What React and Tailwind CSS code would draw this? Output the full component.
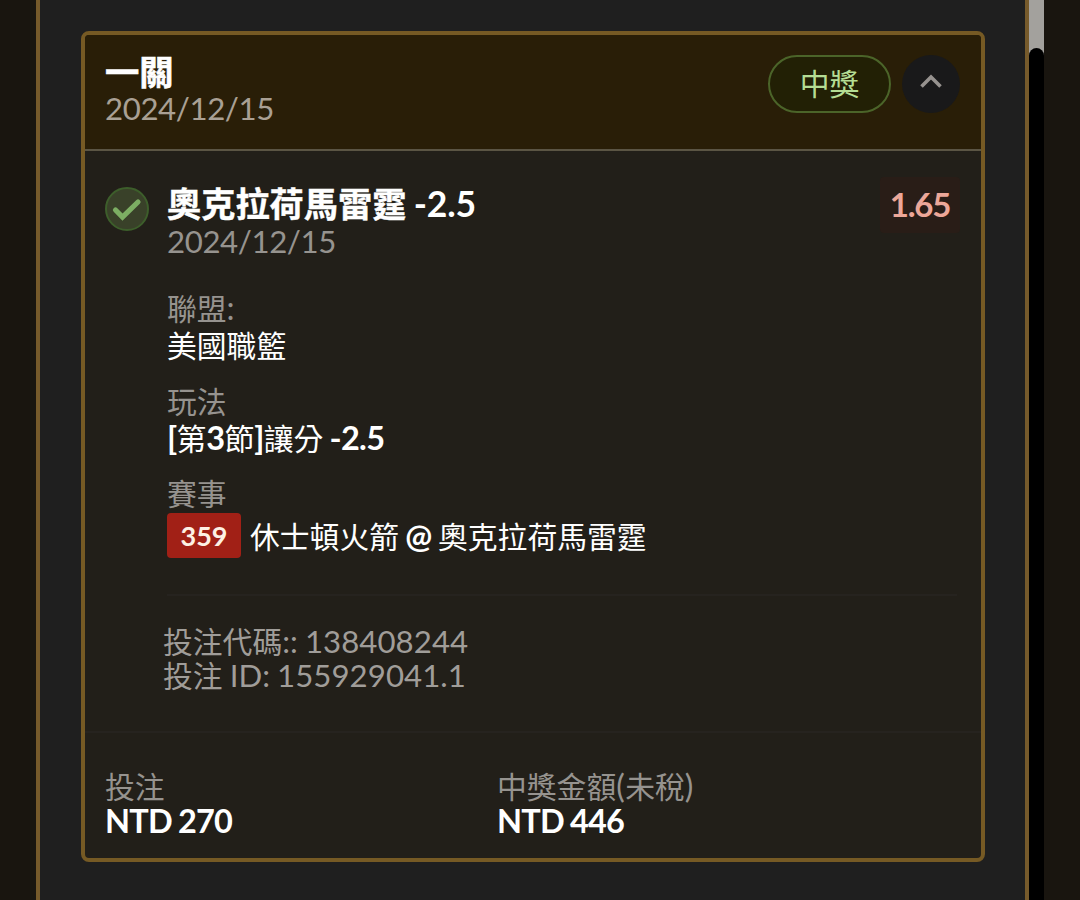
import React from 'react';

const BET_DETAILS = [
  { key: 'league', label: '聯盟', suffix: ':' },
  { key: 'market', label: '玩法' },
  { key: 'match', label: '賽事' }
];

// Chinese runs are set slightly smaller than the Latin ones and never go bold inside values
const Zh = ({ children }) => (
  <span className="text-[29.8px] font-normal tracking-normal">{children}</span>
);

const DetailValue = ({ type }) => {
  if (type === 'league') {
    return <div className="h-[37px] leading-[35px] text-white"><Zh>美國職籃</Zh></div>;
  }

  if (type === 'market') {
    return (
      <div className="h-[37px] text-[32.5px] leading-[35px] font-bold tracking-[-0.7px] text-white">
        [<Zh>第</Zh>3<Zh>節</Zh>]<Zh>讓分</Zh> -2.5
      </div>
    );
  }

  return (
    <div className="mt-px flex h-[45px] items-center text-white">
      <span className="mr-[9px] h-[45px] w-[74px] rounded-[4px] bg-[#a12016] text-center text-[27px] leading-[46px] font-bold tracking-normal text-[#fdf0e4]">
        359
      </span>
      <span className="leading-[45px] font-bold"><Zh>休士頓火箭</Zh> @ <Zh>奧克拉荷馬雷霆</Zh></span>
    </div>
  );
};

const TicketHeader = () => (
  <div className="flex h-[116px] justify-between border-b-2 border-[#5b5544] bg-[#291e07] pt-5 pr-[21px] pl-5">
    <div>
      <div className="h-9 text-[34.3px] leading-[34px] font-bold tracking-normal text-white [-webkit-text-stroke:0.6px_white]">一關</div>
      <div className="h-9 text-[31.2px] leading-[35px] tracking-[-0.4px] text-[#a9a094]">2024/12/15</div>
    </div>
    <div className="flex gap-[11px]">
      <div className="h-[58px] w-[123px] rounded-full border-2 border-[#4b6429] bg-[#222005] text-center leading-[52px] text-[#b4dd94]">
        <Zh>中獎</Zh>
      </div>
      <button className="flex size-[58px] items-center justify-center rounded-full bg-[#19191a] pb-[6px]">
        <svg className="h-[14px] w-[22px]" viewBox="0 0 22 14" fill="none" stroke="#96928f" strokeWidth="3.6">
          <path d="M1.5 12.5L11 3L20.5 12.5" />
        </svg>
      </button>
    </div>
  </div>
);

const Ticket = () => (
  <div className="h-[831px] w-[904px] overflow-hidden rounded-[8px] border-4 border-[#765a24] bg-[#221f19]">
    <TicketHeader />

    <div className="flex h-[582px] border-b-2 border-[#26231f] pt-9 pr-6 pl-5">
      <svg className="mr-[18px] size-11 shrink-0" viewBox="0 0 44 44" fill="none">
        <circle cx="22" cy="22" r="21" fill="#394129" stroke="#3d5e2b" strokeWidth="2" />
        <path d="M10.5 23L17.5 30L33 15" stroke="#7cae63" strokeWidth="5.2" strokeLinecap="round" strokeLinejoin="miter" />
      </svg>

      <div className="flex-1">
        <div className="flex h-[107px] justify-between">
          <div>
            <div className="h-[37px] text-[34.2px] leading-[33px] font-bold tracking-normal text-white">
              <span className="[-webkit-text-stroke:0.4px_white]">奧克拉荷馬雷霆</span>
              <span className="text-[35.5px] tracking-[-0.2px]"> -2.5</span>
            </div>
            <div className="h-[37px] text-[31.2px] leading-[35px] tracking-[-0.4px] text-[#96938f]">2024/12/15</div>
          </div>
          <div className="-mt-[10px] -mr-[3px] h-14 w-[80px] rounded-[4px] bg-[#291d17] text-center text-[33px] leading-[55px] font-bold tracking-[-1.2px] text-[#eca799]">
            1.65
          </div>
        </div>

        <div className="-mt-[4px] flex h-[306px] flex-col gap-[18.5px] border-b-2 border-[#26231f]">
          {BET_DETAILS.map((detail) => (
            <div key={detail.key}>
              <div className="h-[37px] leading-[35px] text-[#96938f]"><Zh>{detail.label}</Zh>{detail.suffix}</div>
              <DetailValue type={detail.key} />
            </div>
          ))}
        </div>

        {/* Ticket codes */}
        <div className="-ml-1 pt-7 text-[31.2px] tracking-[0.05px] text-[#a09d99]">
          <div className="h-[34px] leading-[34px]"><Zh>投注代碼</Zh>:: 138408244</div>
          <div className="h-[34px] leading-[34px]"><Zh>投注</Zh> ID: 155929041.1</div>
        </div>
      </div>
    </div>

    <div className="flex pt-9 pl-5">
      <div className="w-[392px]">
        <div className="h-[34px] leading-[34px] text-[#96938f]"><Zh>投注</Zh></div>
        <div className="h-[34px] text-[32.5px] leading-[35px] font-bold tracking-[-0.8px] text-white">NTD 270</div>
      </div>
      <div>
        <div className="h-[34px] leading-[34px] tracking-[0.5px] text-[#96938f]"><Zh>中獎金額</Zh>(<Zh>未稅</Zh>)</div>
        <div className="h-[34px] text-[32.5px] leading-[35px] font-bold tracking-[-0.8px] text-white">NTD 446</div>
      </div>
    </div>
  </div>
);

const App = () => (
  <div className="flex h-[900px] w-[1080px] overflow-hidden bg-[#19150f] pl-9 font-[Lato,'Noto_Sans_CJK_TC',sans-serif] text-[32px] tracking-[-0.5px] whitespace-nowrap [word-spacing:-1px]">
    <div className="w-[993px] border-x-4 border-[#765a2b] bg-[#1f1f1f] pt-[31px] pl-[41px]">
      <Ticket />
    </div>
    <div className="w-[15px] bg-[#a3a19d] pt-12">
      <div className="h-[852px] rounded-t-full bg-black" />
    </div>
  </div>
);

export default App;
